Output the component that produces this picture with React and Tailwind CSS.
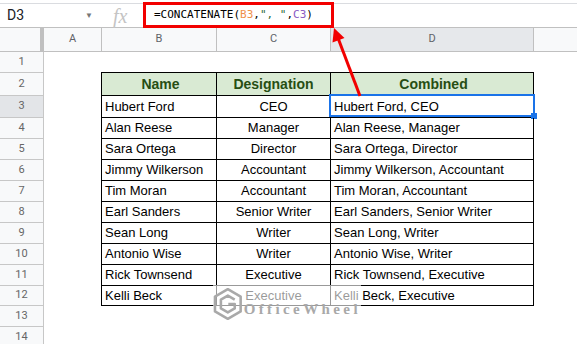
import React from 'react';

const people = [
    ['Hubert Ford', 'CEO'],
    ['Alan Reese', 'Manager'],
    ['Sara Ortega', 'Director'],
    ['Jimmy Wilkerson', 'Accountant'],
    ['Tim Moran', 'Accountant'],
    ['Earl Sanders', 'Senior Writer'],
    ['Sean Long', 'Writer'],
    ['Antonio Wise', 'Writer'],
    ['Rick Townsend', 'Executive'],
    ['Kelli Beck', 'Executive'],
];

// row heights include the bottom grid line
const rows = [
    { n: 1, h: 'h-[21px]', kind: 'top' },
    { n: 2, h: 'h-[23px]', kind: 'head' },
    { n: 3, h: 'h-[22px]', kind: 'data', p: people[0] },
    { n: 4, h: 'h-[21px]', kind: 'data', p: people[1] },
    { n: 5, h: 'h-[21px]', kind: 'data', p: people[2] },
    { n: 6, h: 'h-[21px]', kind: 'data', p: people[3] },
    { n: 7, h: 'h-[21px]', kind: 'data', p: people[4] },
    { n: 8, h: 'h-[21px]', kind: 'data', p: people[5] },
    { n: 9, h: 'h-[21px]', kind: 'data', p: people[6] },
    { n: 10, h: 'h-[21px]', kind: 'data', p: people[7] },
    { n: 11, h: 'h-[21px]', kind: 'data', p: people[8] },
    { n: 12, h: 'h-[20px]', kind: 'data', p: people[9] },
    { n: 13, h: 'h-[21px]', kind: 'none' },
    { n: 14, h: 'h-[21px]', kind: 'none' },
];

const SheetRow = ({ n, h, kind, p }) => {
    const inTable = kind === 'head' || kind === 'data';
    const bc = kind === 'top' ? 'border-b border-black' : inTable ? 'border-l border-b border-black' : '';
    const dc = kind === 'top' ? 'border-b border-black' : inTable ? 'border-l border-r border-b border-black' : '';
    const head = kind === 'head' ? 'bg-[#d9ead3] justify-center font-bold text-[14px] text-[#274e13]' : '';

    return (
        <div className={`flex ${h}`}>
            <div className={`w-[44px] shrink-0 flex items-center justify-center border-r border-b border-[#c7c7c7] text-[11px] text-[#666] font-['Roboto',sans-serif] ${n === 3 ? 'bg-[#e3e5e8]' : 'bg-[#f8f9fa]'}`}>
                {n}
            </div>
            <div className="w-[57px] shrink-0" />
            <div className={`w-[115px] shrink-0 flex items-center pl-[3px] ${bc} ${head}`}>
                {kind === 'head' ? 'Name' : p ? p[0] : ''}
            </div>
            <div className={`w-[114px] shrink-0 flex items-center justify-center ${bc} ${head}`}>
                {kind === 'head' ? 'Designation' : p ? p[1] : ''}
            </div>
            <div className={`relative w-[204px] shrink-0 flex items-center pl-[3px] ${dc} ${head}`}>
                {kind === 'head' ? 'Combined' : p ? `${p[0]}, ${p[1]}` : ''}
                {n === 3 && (
                    <div className="absolute -left-[2px] -top-[2px] -right-[2px] bottom-[0px] border-2 border-[#1a73e8]">
                        <div className="absolute -right-[4px] -bottom-[4px] w-[6px] h-[6px] bg-[#1a73e8]" />
                    </div>
                )}
            </div>
            <div className="flex-1" />
        </div>
    );
};

const OfficeWheelMark = () => (
    <svg width="30" height="34" viewBox="0 0 30 34" fill="none" stroke="#a9a9a9" strokeWidth="2.6" strokeLinejoin="round">
        <path d="M15 2 L28 9.5 L28 24.5 L15 32 L2 24.5 L2 9.5 Z" />
        <path d="M22 12.5 L15 8.5 L8 12.5 L8 21.5 L15 25.5 L22 21.5 L22 17 L15.5 17" />
    </svg>
);

const App = () => {
    return (
        <div className="relative w-[577px] h-[344px] overflow-hidden bg-white font-['Liberation_Sans',Arial,sans-serif] text-[13px] text-black">
            {/* Formula bar */}
            <div className="mt-[3px] h-[24px] flex items-center border-t border-[#dadce0]">
                <div className="w-[101px] shrink-0 flex items-center justify-between pl-[7px] pr-[8px] font-['Roboto',sans-serif] text-[14px] text-[#202124]">
                    <span>D3</span>
                    <span className="text-[8px] text-[#777]">▼</span>
                </div>
                <div className="w-[42px] shrink-0 pl-[12px] font-['Liberation_Serif',serif] italic text-[20px] leading-none text-[#c4c4c4]">
                    fx
                </div>
                <div className="pl-[11px] font-['DejaVu_Sans_Mono',monospace] text-[11px] whitespace-pre">
                    <span>=CONCATENATE(</span>
                    <span className="text-[#f0904a]">B3</span>
                    <span>,</span>
                    <span className="text-[#2f6b3a]">", "</span>
                    <span>,</span>
                    <span className="text-[#8a5cc4]">C3</span>
                    <span>)</span>
                </div>
            </div>

            {/* Column headers */}
            <div className="flex h-[25px] border-y border-[#c0c0c0] bg-[#f8f9fa] font-['Roboto',sans-serif] text-[11px] text-[#5f6368]">
                <div className="w-[44px] shrink-0 border-r-4 border-[#c0c0c0]" />
                <div className="w-[57px] shrink-0 flex items-center justify-center">A</div>
                <div className="w-[115px] shrink-0 flex items-center justify-center border-l border-[#c0c0c0]">B</div>
                <div className="w-[114px] shrink-0 flex items-center justify-center border-l border-[#c0c0c0]">C</div>
                <div className="w-[203px] shrink-0 flex items-center justify-center border-l border-[#c0c0c0] bg-[#e6e8eb]">D</div>
                <div className="flex-1 border-l border-[#c0c0c0]" />
            </div>

            {/* Grid */}
            {rows.map(r => (
                <SheetRow key={r.n} {...r} />
            ))}

            {/* Watermark */}
            <div className="absolute left-[213px] top-[285px] w-[148px] h-[38px] flex items-center gap-[1px] bg-white/60">
                <OfficeWheelMark />
                <span className="mt-[10px] font-['Liberation_Serif',serif] font-bold text-[15px] leading-none tracking-[3.4px] text-[#a9a9a9]">
                    OfficeWheel
                </span>
            </div>

            {/* Annotation: red box and arrow */}
            <div className="absolute left-[143px] top-[2px] w-[191px] h-[26px] border-[3px] border-[#f20000]" />
            <svg className="absolute left-0 top-0 pointer-events-none" width="577" height="344">
                <line x1="338" y1="38" x2="360" y2="96" stroke="#f20000" strokeWidth="3" />
                <polygon points="334,28 344.5,38 332.5,42.5" fill="#f20000" />
            </svg>
        </div>
    );
};

export default App;
